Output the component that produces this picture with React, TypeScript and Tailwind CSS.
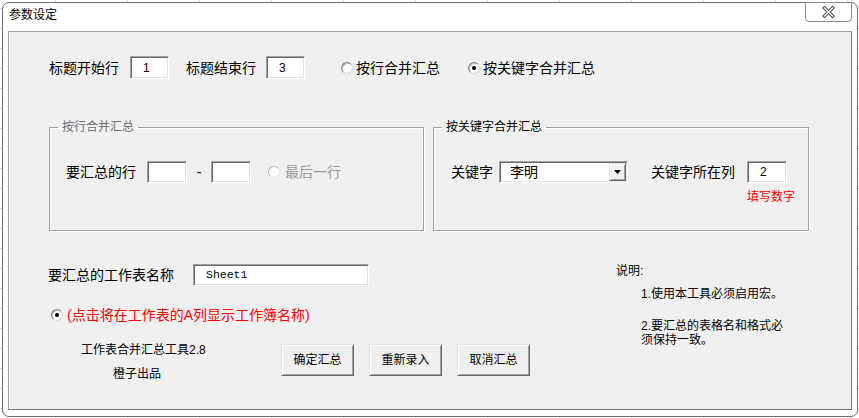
import React from "react";

function Field({ className, text, mono }: { className: string; text?: string; mono?: boolean }) {
  return (
    <div
      className={
        "flex items-center bg-white border border-[#a0a0a0] border-b-white border-r-white shadow-[inset_1px_1px_0_#696969,inset_-1px_-1px_0_#e3e3e3] " +
        className
      }
    >
      {text ? (
        mono ? (
          <span className="pl-[12px] font-['Liberation_Mono',monospace] text-[11.5px] leading-none text-black">{text}</span>
        ) : (
          <span className="pl-[12px] text-[12px] leading-none text-black">{text}</span>
        )
      ) : null}
    </div>
  );
}

function Radio({ checked, disabled, className }: { checked?: boolean; disabled?: boolean; className?: string }) {
  return (
    <span
      className={
        "flex shrink-0 items-center justify-center w-[12px] h-[12px] rounded-full border " +
        (disabled
          ? "bg-white border-[#b4b4b4] border-b-[#e6e6e6] border-r-[#e6e6e6] "
          : "bg-white border-[#7c7c7c] border-b-[#d8d8d8] border-r-[#d8d8d8] shadow-[inset_1px_1px_0_#c0c0c0] ") +
        (className ?? "")
      }
    >
      {checked ? <span className="w-[4px] h-[4px] rounded-full bg-black" /> : null}
    </span>
  );
}

function Button({ label }: { label: string }) {
  return (
    <div className="flex items-center justify-center w-[73px] h-[32px] bg-[#f0f0f0] border border-[#e3e3e3] border-b-[#696969] border-r-[#696969] shadow-[inset_1px_1px_0_#ffffff,inset_-1px_-1px_0_#a0a0a0] text-[12px] leading-none text-black">
      {label}
    </div>
  );
}

export default function App() {
  return (
    <div className="w-[859px] h-[418px] overflow-hidden bg-white bg-[repeating-linear-gradient(90deg,transparent_0_55px,#dcdcdc_55px_56px,transparent_56px_72px),repeating-linear-gradient(180deg,transparent_0_8px,#dcdcdc_8px_9px,transparent_9px_20px)] pl-[2px] pt-[2px] font-['Liberation_Sans','Noto_Sans_CJK_SC',sans-serif] text-black">
      <div className="flex flex-col w-[856px] h-[415px] bg-white border border-[#6e6e6e] rounded-[7px] px-[5px] pb-[6px]">
        {/* title bar */}
        <div className="flex items-start justify-between h-[28px]">
          <span className="ml-[1px] mt-[6px] text-[12px] leading-[12px]">参数设定</span>
          <div className="-mt-[1px] flex items-center justify-center w-[47px] h-[20px] bg-white border border-[#8c8c8c] rounded-b-[4px]">
            <svg width="15" height="12" viewBox="0 0 15 12">
              <path d="M3.5 2 L11.5 10 M11.5 2 L3.5 10" stroke="#4a4a4a" strokeWidth="3.4" strokeLinecap="square" fill="none" />
              <path d="M3.5 2 L11.5 10 M11.5 2 L3.5 10" stroke="#ffffff" strokeWidth="1.3" strokeLinecap="square" fill="none" />
            </svg>
          </div>
        </div>

        {/* client area */}
        <div className="flex-1 flex flex-col bg-[#f0f0f0] border border-[#a0a0a0] border-b-[#7a7a7a] border-r-[#7a7a7a]">
          {/* row 1 */}
          <div className="flex items-center h-[23px] mt-[24px] pl-[40px]">
            <span className="text-[14px] leading-none">标题开始行</span>
            <Field className="ml-[11px] w-[39px] h-[23px]" text="1" />
            <span className="ml-[17px] text-[14px] leading-none">标题结束行</span>
            <Field className="ml-[10px] w-[39px] h-[23px]" text="3" />
            <Radio className="ml-[36px]" />
            <span className="ml-[3px] text-[14px] leading-none">按行合并汇总</span>
            <Radio checked className="ml-[28px]" />
            <span className="ml-[3px] text-[14px] leading-none">按关键字合并汇总</span>
          </div>

          {/* groups */}
          <div className="flex mt-[42px] pl-[40px]">
            <fieldset className="w-[375px] h-[110px] border border-[#a0a0a0] shadow-[inset_1px_1px_0_#ffffff,1px_1px_0_#ffffff]">
              <legend className="ml-[8px] px-[4px] text-[12px] leading-[12px] text-[#6d6d6d]">按行合并汇总</legend>
              <div className="flex items-center h-[22px] mt-[28px] pl-[16px]">
                <span className="text-[14px] leading-none">要汇总的行</span>
                <Field className="ml-[11px] w-[40px] h-[22px]" />
                <span className="w-[24px] text-center text-[14px] leading-none">-</span>
                <Field className="w-[40px] h-[22px]" />
                <Radio disabled className="ml-[17px]" />
                <span className="ml-[5px] text-[14px] leading-none text-[#9a9a9a]">最后一行</span>
              </div>
            </fieldset>
            <fieldset className="ml-[9px] w-[376px] h-[110px] border border-[#a0a0a0] shadow-[inset_1px_1px_0_#ffffff,1px_1px_0_#ffffff]">
              <legend className="ml-[8px] px-[4px] text-[12px] leading-[12px]">按关键字合并汇总</legend>
              <div className="flex items-start mt-[28px] pl-[17px]">
                <span className="text-[14px] leading-[22px]">关键字</span>
                <div className="ml-[6px] flex items-center justify-between w-[129px] h-[22px] bg-white border border-[#a0a0a0] border-b-white border-r-white shadow-[inset_1px_1px_0_#696969,inset_-1px_-1px_0_#e3e3e3]">
                  <span className="pl-[10px] text-[14px] leading-none">李明</span>
                  <div className="mr-[1px] flex items-center justify-center w-[17px] h-[18px] bg-[#f0f0f0] border border-[#e3e3e3] border-b-[#696969] border-r-[#696969] shadow-[inset_1px_1px_0_#ffffff,inset_-1px_-1px_0_#a0a0a0]">
                    <svg width="7" height="4" viewBox="0 0 7 4">
                      <path d="M0 0 H7 L3.5 4 Z" fill="#000000" />
                    </svg>
                  </div>
                </div>
                <span className="ml-[23px] text-[14px] leading-[22px]">关键字所在列</span>
                <div className="ml-[12px] flex flex-col">
                  <Field className="w-[40px] h-[22px]" text="2" />
                  <span className="mt-[8px] text-[12px] leading-[12px] text-[#ff0000] whitespace-nowrap">填写数字</span>
                </div>
              </div>
            </fieldset>
          </div>

          {/* bottom section */}
          <div className="flex">
            <div className="flex flex-col w-[607px]">
              <div className="flex items-center mt-[33px] pl-[39px]">
                <span className="text-[14px] leading-[22px]">要汇总的工作表名称</span>
                <Field className="ml-[19px] w-[176px] h-[22px]" text="Sheet1" mono />
              </div>
              <div className="flex items-center h-[16px] mt-[21px] pl-[42px]">
                <Radio checked />
                <span className="ml-[4px] text-[14px] leading-none text-[#ff0000]">(点击将在工作表的A列显示工作簿名称)</span>
              </div>
              <div className="flex items-start mt-[21px] pl-[72px]">
                <div className="w-[136px] text-[12px] leading-[12px]">
                  <div>工作表合并汇总工具2.8</div>
                  <div className="mt-[12px] pl-[32px]">橙子出品</div>
                </div>
                <div className="ml-[64px] flex gap-[15px]">
                  <Button label="确定汇总" />
                  <Button label="重新录入" />
                  <Button label="取消汇总" />
                </div>
              </div>
            </div>
            <div className="flex flex-col mt-[34px] text-[12px] leading-[12px]">
              <div>说明:</div>
              <div className="pl-[25px] mt-[11px]">1.使用本工具必须启用宏。</div>
              <div className="pl-[25px] mt-[19px] leading-[14px]">
                2.要汇总的表格名和格式必
                <br />
                须保持一致。
              </div>
            </div>
          </div>
        </div>
      </div>
    </div>
  );
}
